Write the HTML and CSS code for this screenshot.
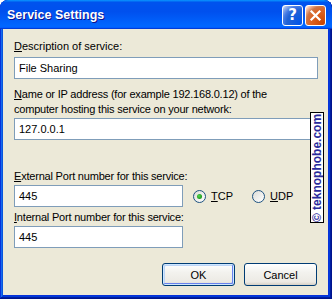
FILE: index.html
```html
<!DOCTYPE html>
<html lang="en">
<head>
    <meta charset="UTF-8">
    <title>Service Settings</title>
    <link rel="stylesheet" href="styles.css">
</head>
<body>

<div class="window">
    <div class="titlebar">
        <span class="title">Service Settings</span>
        <div class="caption-buttons">
            <span class="cap-btn help">?</span>
            <span class="cap-btn close">
                <svg width="13" height="13" viewBox="0 0 13 13">
                    <path d="M2.5 2.5 L10.5 10.5 M10.5 2.5 L2.5 10.5" stroke="#fff" stroke-width="2.2" stroke-linecap="square"/>
                </svg>
            </span>
        </div>
    </div>

    <div class="content">
        <div class="field-label"><u>D</u>escription of service:</div>
        <div class="textbox wide">File Sharing</div>

        <div class="field-label two-line"><u>N</u>ame or IP address (for example 192.168.0.12) of the<br>computer hosting this service on your network:</div>
        <div class="textbox wide">127.0.0.1</div>

        <div class="ports">
            <div class="field-label span-all"><u>E</u>xternal Port number for this service:</div>
            <div class="textbox">445</div>
            <div class="radios">
                <div class="radio checked"><span class="dot"></span><span class="radio-text"><u>T</u>CP</span></div>
                <div class="radio"><span class="dot"></span><span class="radio-text"><u>U</u>DP</span></div>
            </div>
            <div class="field-label span-all small-gap"><u>I</u>nternal Port number for this service:</div>
            <div class="textbox">445</div>
        </div>

        <div class="buttons">
            <button type="button" class="btn default">OK</button>
            <button type="button" class="btn">Cancel</button>
        </div>
    </div>

    <div class="watermark"><span>© teknophobe.com</span></div>
</div>

</body>
</html>
```

FILE: styles.css
```css
body {
    margin: 0;
    padding: 0;
    background-color: white;
    font-family: "Liberation Sans", Arial, sans-serif;
    font-size: 11px;
    color: black;
}

.window {
    position: relative;
    width: 332px;
    height: 299px;
    box-sizing: border-box;
    border-radius: 8px 8px 0 0;
    overflow: hidden;
    background-color: #0831d9;
    box-shadow: inset -1px -1px #00138c, inset 1px 1px #0831d9, inset -2px -2px #001ea0,
        inset 2px 2px #166aee, inset -3px -3px #003bda, inset 3px 3px #0855dd;
    display: flex;
    flex-direction: column;
}

.titlebar {
    height: 29px;
    display: flex;
    align-items: center;
    justify-content: space-between;
    padding: 0 6px 0 7px;
    background: linear-gradient(180deg, #0997ff, #0053ee 8%, #0050ee 40%, #06f 88%, #06f 93%, #005bff 95%, #003dd7 96%, #003dd7);
    border-radius: 8px 8px 0 0;
}

.title {
    color: white;
    font-family: "Liberation Sans", Arial, sans-serif;
    font-weight: bold;
    font-size: 12.5px;
    text-shadow: 1px 1px #0f1089;
    padding-top: 1px;
}

.caption-buttons {
    display: flex;
    gap: 2px;
    padding-top: 1px;
}

.cap-btn {
    width: 21px;
    height: 21px;
    box-sizing: border-box;
    border: 1px solid white;
    border-radius: 3px;
    display: flex;
    align-items: center;
    justify-content: center;
    color: white;
}

.help {
    background: radial-gradient(circle at 90% 90%, #0054e9 0%, #2263d5 55%, #4479e4 70%, #a3bbec 90%, white 100%);
    font-family: "DejaVu Sans", sans-serif;
    font-weight: bold;
    font-size: 15px;
}

.close {
    background: radial-gradient(circle at 90% 90%, #cc4600 0%, #dc6527 55%, #cd7546 70%, #ffccb2 90%, white 100%);
}

.content {
    flex: 1;
    margin: 0 4px 4px 3px;
    background-color: #ece9d8;
    padding: 11px 10px 0 11px;
    display: flex;
    flex-direction: column;
    align-items: flex-start;
}

.field-label {
    line-height: 13px;
    margin-bottom: 4px;
}

.field-label.two-line {
    margin-top: 8px;
    line-height: 15px;
    margin-bottom: 1px;
    letter-spacing: -0.2px;
}

.textbox {
    height: 22px;
    box-sizing: border-box;
    border: 1px solid #7f9db9;
    background-color: white;
    padding: 0 4px;
    line-height: 20px;
}

.textbox.wide {
    width: 304px;
}

.ports {
    display: grid;
    grid-template-columns: 169px auto;
    margin-top: 30px;
}

.ports .field-label {
    margin-bottom: 2px;
    letter-spacing: -0.2px;
}

.ports .span-all {
    grid-column: 1 / 3;
    white-space: nowrap;
}

.ports .small-gap {
    margin-top: 4px;
}

.radios {
    display: flex;
    align-items: center;
}

.radio {
    display: flex;
    align-items: center;
    margin-left: 10px;
}

.radio + .radio {
    margin-left: 19px;
}

.dot {
    width: 13px;
    height: 13px;
    box-sizing: border-box;
    border: 1px solid #1c5180;
    border-radius: 50%;
    background: linear-gradient(135deg, #dcdcd7, #ffffff);
    display: flex;
    align-items: center;
    justify-content: center;
}

.radio.checked .dot::after {
    content: "";
    width: 5px;
    height: 5px;
    border-radius: 50%;
    background: radial-gradient(circle at 40% 40%, #55d551, #21a121 60%, #1a941a);
}

.radio-text {
    margin-left: 5px;
}

.buttons {
    align-self: stretch;
    display: flex;
    justify-content: flex-end;
    gap: 9px;
    margin-top: 15px;
    padding-right: 1px;
}

.btn {
    width: 73px;
    height: 23px;
    box-sizing: border-box;
    border: 1px solid #003c74;
    border-radius: 3px;
    background: linear-gradient(180deg, #ffffff, #f3f2ee 40%, #eceae4 85%, #d6d0c5);
    font-family: "Liberation Sans", Arial, sans-serif;
    font-size: 11px;
    color: black;
    padding: 0;
}

.btn.default {
    box-shadow: inset 0 0 0 1px #cee7ff, inset -1px -1px 0 1px #6982ee, inset 1px 1px 0 1px #bcd4f6;
}

.watermark {
    position: absolute;
    left: 310px;
    top: 112px;
    width: 14px;
    height: 111px;
    box-sizing: border-box;
    border: 1px solid black;
    background-color: white;
    overflow: hidden;
}

.watermark span {
    position: absolute;
    left: 50%;
    top: 50%;
    transform: translate(-50%, -50%) rotate(-90deg);
    white-space: nowrap;
    font-family: "Liberation Sans", Arial, sans-serif;
    font-weight: bold;
    font-size: 12px;
    line-height: 12px;
    color: #2a2a9c;
}
```
